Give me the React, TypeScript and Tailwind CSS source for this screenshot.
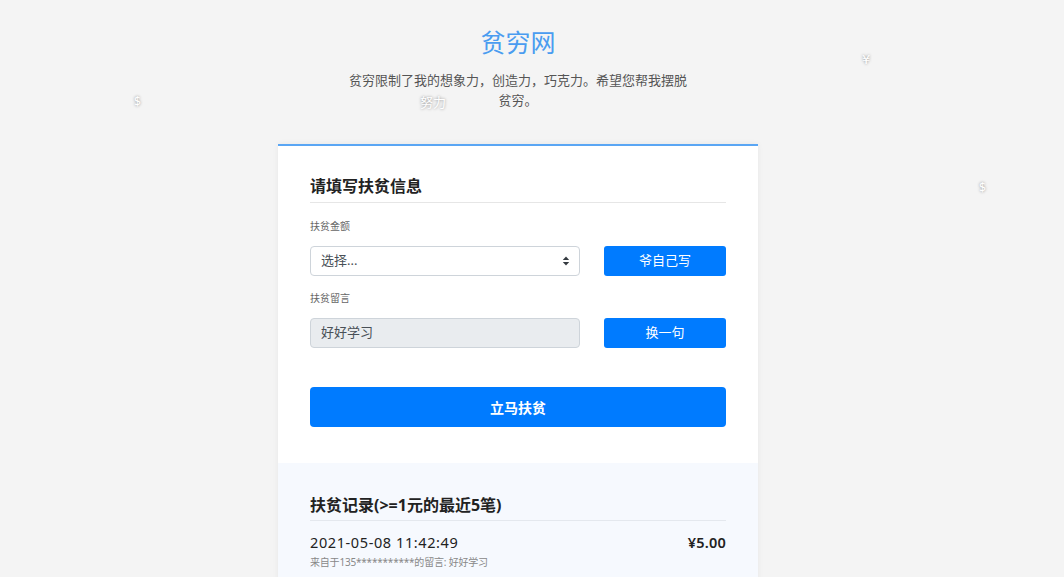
import React from "react";

const font = { fontFamily: '"Noto Sans", "Noto Sans CJK SC", sans-serif' };
const wide = { fontFamily: '"DejaVu Sans", "Noto Sans CJK SC", sans-serif' };

function Arrows() {
  return (
    <svg width="8" height="10" viewBox="0 0 8 10">
      <path d="M4 0.5 L7.2 4 H0.8 Z" fill="#343a40" />
      <path d="M4 9.5 L7.2 6 H0.8 Z" fill="#343a40" />
    </svg>
  );
}

export default function App() {
  return (
    <div className="relative min-h-[577px] w-full overflow-hidden bg-[#f4f4f4]" style={font}>
      {/* floating decorations */}
      <span className="absolute left-[134px] top-[93px] text-[12px] text-white [text-shadow:0_0_3px_rgba(0,0,0,0.45)]">$</span>
      <span className="absolute left-[862px] top-[50px] text-[13px] text-white [text-shadow:0_0_3px_rgba(0,0,0,0.45)]" style={wide}>¥</span>
      <span className="absolute left-[979px] top-[179px] text-[12px] text-white [text-shadow:0_0_3px_rgba(0,0,0,0.45)]">$</span>
      <span className="absolute left-[420px] top-[93px] text-[13px] text-white [text-shadow:0_0_3px_rgba(0,0,0,0.45)]">努力</span>

      <div className="flex flex-col items-center pt-[25px] pr-[28px]">
        <h1 className="text-[25px] leading-[34px] font-normal text-[#4a9cf0]">贫穷网</h1>
        <p className="mt-[11px] w-[342px] text-center text-[13px] leading-[20px] text-[#555]">
          贫穷限制了我的想象力，创造力，巧克力。希望您帮我摆脱贫穷。
        </p>

        <div className="mt-[34px] w-[480px] border-t-2 border-[#5aa6f4] bg-white shadow-[0_0_6px_rgba(0,0,0,0.06)]">
          <div className="px-8 pt-[28px] pb-[36px]">
            <h2 className="border-b border-[#e6e6e6] pb-[4px] text-[16px] font-bold leading-[24px] text-[#222]">
              请填写扶贫信息
            </h2>
            <div className="mt-[15px] text-[10px] leading-[16px] text-[#666]">扶贫金额</div>
            <div className="mt-[12px] flex gap-[24px]">
              <div className="flex h-[30px] w-[270px] items-center justify-between rounded-[4px] border border-[#ced4da] bg-white pl-[10px] pr-[9px] text-[13px] text-[#495057]">
                <span>选择...</span>
                <Arrows />
              </div>
              <button className="h-[30px] w-[122px] rounded-[3px] bg-[#007bff] text-[13px] text-white">爷自己写</button>
            </div>
            <div className="mt-[14px] text-[10px] leading-[16px] text-[#666]">扶贫留言</div>
            <div className="mt-[12px] flex gap-[24px]">
              <div className="flex h-[30px] w-[270px] items-center rounded-[4px] border border-[#ced4da] bg-[#e9ecef] pl-[10px] text-[13px] text-[#495057]">
                好好学习
              </div>
              <button className="h-[30px] w-[122px] rounded-[3px] bg-[#007bff] text-[13px] text-white">换一句</button>
            </div>
            <button className="mt-[39px] h-[40px] w-full rounded-[4px] bg-[#007bff] text-[14px] font-bold text-white">
              立马扶贫
            </button>
          </div>
          <div className="bg-[#f6f9fe] px-8 pt-[30px] pb-[20px]">
            <h2 className="border-b border-[#e4e8ee] pb-[3px] text-[16px] font-bold leading-[24px] text-[#222]">
              扶贫记录(&gt;=1元的最近5笔)
            </h2>
            <div className="mt-[11px] flex items-center justify-between text-[14.5px] leading-[20px] tracking-[0.6px] text-[#222]">
              <span>2021-05-08 11:42:49</span>
              <span className="font-semibold tracking-[0.2px]">¥5.00</span>
            </div>
            <div className="mt-[2px] text-[10px] leading-[16px] tracking-[-0.2px] text-[#888]">来自于135***********的留言: 好好学习</div>
          </div>
        </div>
      </div>
    </div>
  );
}
